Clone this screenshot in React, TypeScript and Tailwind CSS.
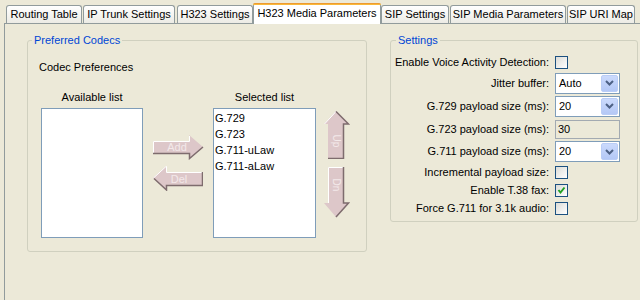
import React from 'react';

const tabs = [
  { label: 'Routing Table', cls: 'w-[76px]' },
  { label: 'IP Trunk Settings', cls: 'w-[92px] ml-[1px]' },
  { label: 'H323 Settings', cls: 'w-[76px] ml-[2px]' },
  { label: 'H323 Media Parameters', cls: 'w-[128px]', active: true },
  { label: 'SIP Settings', cls: 'w-[68px]' },
  { label: 'SIP Media Parameters', cls: 'w-[116px] ml-[1px]' },
  { label: 'SIP URI Map', cls: 'w-[68px] ml-[1px]' },
];

const Checkbox = ({ checked }: { checked?: boolean }) => (
  <span className="block w-[13px] h-[13px] border border-[#1C5180] bg-linear-to-br from-[#DCDCD7] to-white">
    {checked && (
      <svg width="11" height="11" viewBox="0 0 11 11" className="block">
        <path d="M2.5 5 L4.5 7.5 L8.5 2.5" stroke="#21A121" strokeWidth="2" fill="none" />
      </svg>
    )}
  </span>
);

const Select = ({ value }: { value: string }) => (
  <div className="w-[65px] h-[21px] border border-[#7F9DB9] bg-white flex items-center">
    <span className="flex-1 pl-[3px] leading-none">{value}</span>
    <span className="w-[17px] h-[17px] mr-[1px] rounded-[2px] bg-linear-to-b from-[#CBDAFC] to-[#B4C8F6] border border-[#BACDF6] flex items-center justify-center">
      <svg width="9" height="6" viewBox="0 0 9 6">
        <path d="M1 1 L4.5 4.5 L8 1" stroke="#4D6185" strokeWidth="2" fill="none" />
      </svg>
    </span>
  </div>
);

const Row = ({ label, h, children }: { label: string; h: string; children: React.ReactNode }) => (
  <div className={`flex items-center ${h}`}>
    <span className="w-[158px] text-right whitespace-nowrap">{label}</span>
    <div className="ml-[6px]">{children}</div>
  </div>
);

const FILL = '#DDC7C9';
const HI = '#FFFFFF';
const SH = '#7E6C6E';
const TX = '#F3E9E9';

const AddArrow = () => (
  <svg width="51" height="25" viewBox="0 0 51 25" className="block">
    <polygon points="0,6 36,6 36,0 50,12 36,24 36,18 0,18" fill={FILL} />
    <polyline points="0.5,18 0.5,6.5 36.5,6.5 36.5,1" stroke={HI} fill="none" />
    <polyline points="0,18.5 36.5,18.5 36.5,23.5 50,12" stroke={SH} strokeWidth="1.5" fill="none" />
    <text x="24" y="16" fontSize="11" fill={TX} textAnchor="middle" fontFamily="Liberation Sans, sans-serif">Add</text>
  </svg>
);

const DelArrow = () => (
  <svg width="50" height="25" viewBox="0 0 50 25" className="block">
    <polygon points="0,12 13,0 13,6 49,6 49,19 13,19 13,24" fill={FILL} />
    <polyline points="0.5,12 13,0.5 13.5,0.5 13.5,6.5 49,6.5" stroke={HI} fill="none" />
    <polyline points="1,12.5 13.5,24 13.5,19.5 49.5,19.5 49.5,6" stroke={SH} strokeWidth="1.5" fill="none" />
    <text x="26" y="17" fontSize="11" fill={TX} textAnchor="middle" fontFamily="Liberation Sans, sans-serif">Del</text>
  </svg>
);

const UpArrow = () => (
  <svg width="26" height="48" viewBox="0 0 26 48" className="block">
    <polygon points="12,0 0,13 4,13 4,47 19,47 19,13 25,13" fill={FILL} />
    <polyline points="0.5,13 12,0.5 M4.5,13 4.5,47" stroke={HI} fill="none" />
    <polyline points="12,0.5 24.5,13 19.5,13 19.5,47.5 4,47.5" stroke={SH} strokeWidth="1.5" fill="none" />
    <text x="12" y="33" fontSize="10" fill={TX} textAnchor="middle" transform="rotate(90 12 30)" fontFamily="Liberation Sans, sans-serif">Up</text>
  </svg>
);

const DnArrow = () => (
  <svg width="26" height="51" viewBox="0 0 26 51" className="block">
    <polygon points="4,0 19,0 19,36 25,36 12,50 0,36 4,36" fill={FILL} />
    <polyline points="4.5,36 4.5,0.5 19,0.5 M0.5,36 4,36" stroke={HI} fill="none" />
    <polyline points="19.5,0 19.5,36 24.5,36 12,50" stroke={SH} strokeWidth="1.5" fill="none" />
    <text x="12" y="21" fontSize="10" fill={TX} textAnchor="middle" transform="rotate(90 12 18)" fontFamily="Liberation Sans, sans-serif">Dn</text>
  </svg>
);

export default function App() {
  return (
    <div className="w-[640px] h-[300px] bg-[#ECE9D8] overflow-hidden text-[11px] text-black font-['Liberation_Sans',Arial,sans-serif]">
      <div className="flex items-end h-[23px] pl-[6px]">
        {tabs.map((t) =>
          t.active ? (
            <div
              key={t.label}
              className={`${t.cls} relative z-10 h-[21px] -mb-[1px] bg-white border-x border-[#919B9C] rounded-t-[3px] flex flex-col`}
            >
              <div className="h-[3px] -mx-[1px] rounded-t-[3px] bg-linear-to-b from-[#E68B2C] to-[#FFC73C]" />
              <div className="flex-1 flex items-center justify-center whitespace-nowrap pb-[3px]">{t.label}</div>
            </div>
          ) : (
            <div
              key={t.label}
              className={`${t.cls} h-[18px] border border-b-0 border-[#919B9C] rounded-t-[3px] bg-linear-to-b from-white to-[#ECEBE5] flex items-center justify-center whitespace-nowrap`}
            >
              {t.label}
            </div>
          )
        )}
      </div>
      <div className="ml-[4px] h-[277px] border-l border-t border-[#919B9C] flex items-start pl-[22px] pt-[10px]">
        <fieldset className="w-[340px] border border-[#D0D0BF] rounded-[3px] px-0">
          <legend className="ml-[4px] px-[2px] leading-[13px] text-[#0046D5]">Preferred Codecs</legend>
          <div className="pt-[14px] pb-[13px] pl-[11px]">
            <div className="leading-[13px]">Codec Preferences</div>
            <div className="flex mt-[17px] pl-[2px]">
              <div className="w-[102px] flex flex-col items-center">
                <div className="leading-[13px]">Available list</div>
                <div className="mt-[4px] w-[102px] h-[130px] border border-[#7F9DB9] bg-white" />
              </div>
              <div className="ml-[10px] w-[51px] flex flex-col pt-[44px]">
                <AddArrow />
                <div className="mt-[6px]">
                  <DelArrow />
                </div>
              </div>
              <div className="ml-[9px] w-[103px] flex flex-col items-center">
                <div className="leading-[13px]">Selected list</div>
                <div className="mt-[4px] w-[103px] h-[130px] border border-[#7F9DB9] bg-white pt-[1px]">
                  {['G.729', 'G.723', 'G.711-uLaw', 'G.711-aLaw'].map((c) => (
                    <div key={c} className="h-[16px] leading-[16px] pl-[1px]">{c}</div>
                  ))}
                </div>
              </div>
              <div className="ml-[8px] w-[26px] flex flex-col pt-[20px]">
                <UpArrow />
                <div className="mt-[8px]">
                  <DnArrow />
                </div>
              </div>
            </div>
          </div>
        </fieldset>
        <fieldset className="ml-[23px] w-[248px] border border-[#D0D0BF] rounded-[3px] px-0">
          <legend className="ml-[5px] px-[2px] leading-[13px] text-[#0046D5]">Settings</legend>
          <div className="pt-[5px] pb-[4px]">
            <Row label="Enable Voice Activity Detection:" h="h-[20px]">
              <Checkbox />
            </Row>
            <Row label="Jitter buffer:" h="h-[22px]">
              <Select value="Auto" />
            </Row>
            <Row label="G.729 payload size (ms):" h="h-[24px]">
              <Select value="20" />
            </Row>
            <Row label="G.723 payload size (ms):" h="h-[22px]">
              <div className="w-[65px] h-[19px] border border-[#A3AAB1] bg-[#ECE9D8] flex items-center pl-[2px]">30</div>
            </Row>
            <Row label="G.711 payload size (ms):" h="h-[23px]">
              <Select value="20" />
            </Row>
            <Row label="Incremental payload size:" h="h-[18px]">
              <Checkbox />
            </Row>
            <Row label="Enable T.38 fax:" h="h-[18px]">
              <Checkbox checked />
            </Row>
            <Row label="Force G.711 for 3.1k audio:" h="h-[18px]">
              <Checkbox />
            </Row>
          </div>
        </fieldset>
      </div>
    </div>
  );
}
